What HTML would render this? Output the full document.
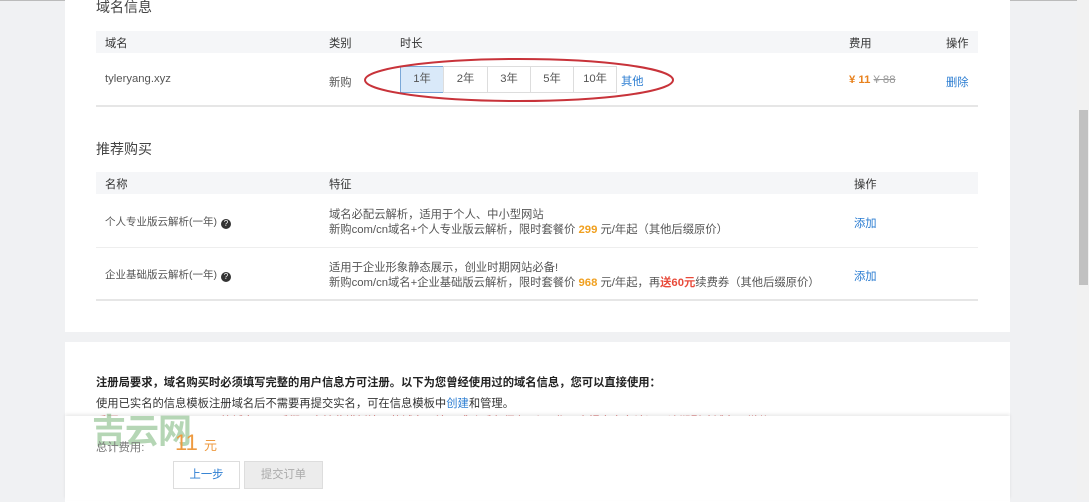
<!DOCTYPE html>
<html><head><meta charset="utf-8"><style>
*{margin:0;padding:0;box-sizing:border-box}
body{width:1089px;height:500px;overflow:hidden;background:#f0f1f3;font-family:"Liberation Sans","Noto Sans CJK SC",sans-serif;font-size:11.3px;color:#333;position:relative}
.a{position:absolute;white-space:nowrap}
.p{position:absolute;background:#fff;left:65px;width:945px}
.hd{position:absolute;left:96px;width:882px;background:#f5f6f8}
.ln{position:absolute;left:96px;width:882px;height:2px;background:#e6e6e6}
.ln1{position:absolute;left:96px;width:882px;height:1px;background:#eee}
.yb{position:absolute;top:66px;height:27px;border:1px solid #ddd;text-align:center;line-height:25px;color:#555;background:#fff}
.b{color:#2a7cd1}
.o{color:#f0a020;font-weight:bold}
.q{display:inline-block;width:10px;height:10px;border-radius:50%;background:#333;color:#fff;font-size:8px;line-height:10px;text-align:center;margin-left:4px;vertical-align:-1px}
</style></head><body>
<div style="position:absolute;left:0;top:0;width:1089px;height:1px;background:#bbb"></div>
<div class="p" style="top:0;height:332px"></div>
<div class="p" style="top:342px;height:160px"></div>
<div class="a" style="left:96px;top:-3px;font-size:14px;color:#444">域名信息</div>
<div class="hd" style="top:31px;height:22px"></div>
<div class="a" style="left:105px;top:35px">域名</div>
<div class="a" style="left:329px;top:35px">类别</div>
<div class="a" style="left:400px;top:35px">时长</div>
<div class="a" style="left:849px;top:35px">费用</div>
<div class="a" style="left:946px;top:35px">操作</div>
<div class="a" style="left:105px;top:73px;color:#555">tyleryang.xyz</div>
<div class="a" style="left:329px;top:74px;color:#555">新购</div>
<div class="yb" style="left:400px;width:44px;background:#d9e9f9;border-color:#7aa8d8">1年</div>
<div class="yb" style="left:443px;width:45px">2年</div>
<div class="yb" style="left:487px;width:44px">3年</div>
<div class="yb" style="left:530px;width:44px">5年</div>
<div class="yb" style="left:573px;width:44px">10年</div>
<div class="a b" style="left:621px;top:73px">其他</div>
<svg class="a" style="left:360px;top:55px" width="320" height="50"><ellipse cx="159" cy="25" rx="154" ry="21" fill="none" stroke="#c8333a" stroke-width="2"/></svg>
<div class="a" style="left:849px;top:74px"><span class="o" style="color:#e8821e">¥ 11</span> <span style="color:#999;text-decoration:line-through">¥ 88</span></div>
<div class="a b" style="left:946px;top:74px">删除</div>
<div class="ln" style="top:105px"></div>
<div class="a" style="left:96px;top:139px;font-size:14px;color:#444">推荐购买</div>
<div class="hd" style="top:172px;height:22px"></div>
<div class="a" style="left:105px;top:176px">名称</div>
<div class="a" style="left:329px;top:176px">特征</div>
<div class="a" style="left:854px;top:176px">操作</div>
<div class="a" style="left:105px;top:214px;font-size:10.5px;color:#555">个人专业版云解析(一年)<span class="q">?</span></div>
<div class="a" style="left:329px;top:206px;color:#555">域名必配云解析，适用于个人、中小型网站</div>
<div class="a" style="left:329px;top:221px;color:#555">新购com/cn域名+个人专业版云解析，限时套餐价 <span class="o">299</span> 元/年起（其他后缀原价）</div>
<div class="a b" style="left:854px;top:215px">添加</div>
<div class="ln1" style="top:247px"></div>
<div class="a" style="left:105px;top:267px;font-size:10.5px;color:#555">企业基础版云解析(一年)<span class="q">?</span></div>
<div class="a" style="left:329px;top:259px;color:#555">适用于企业形象静态展示，创业时期网站必备!</div>
<div class="a" style="left:329px;top:274px;color:#555">新购com/cn域名+企业基础版云解析，限时套餐价 <span class="o">968</span> 元/年起，再<span style="color:#e84a3a;font-weight:bold">送60元</span>续费券（其他后缀原价）</div>
<div class="a b" style="left:854px;top:268px">添加</div>
<div class="ln" style="top:299px"></div>
<div class="a" style="left:96px;top:374px;font-weight:bold;color:#222">注册局要求，域名购买时必须填写完整的用户信息方可注册。以下为您曾经使用过的域名信息，您可以直接使用：</div>
<div class="a" style="left:96px;top:395px;color:#333">使用已实名的信息模板注册域名后不需要再提交实名，可在信息模板中<span class="b">创建</span>和管理。</div>
<div class="a" style="left:96px;top:413px;color:#d45a5a">重要：.xin/.vip/.work/.red等域名以及后缀不支持此模板注册的域名，注册成功后必须在5个工作日内提交实名认证，逾期影响域名正常使用</div>
<div style="position:absolute;left:65px;top:416px;width:945px;height:84px;background:#fff;box-shadow:0 -2px 3px rgba(0,0,0,.08)"></div>
<div class="a" style="left:92px;top:404px;font-size:34px;color:rgba(120,180,120,.55);font-weight:bold;letter-spacing:-1px">吉云网</div>
<div class="a" style="left:96px;top:439px;color:#777">总计费用:</div>
<div class="a" style="left:175px;top:430px;font-size:22px;color:#ee9a40">11 <span style="font-size:13px">元</span></div>
<div class="a" style="left:173px;top:461px;width:67px;height:28px;border:1px solid #ddd;text-align:center;line-height:26px;color:#2a7cd1;background:#fff">上一步</div>
<div class="a" style="left:244px;top:461px;width:79px;height:28px;border:1px solid #ddd;text-align:center;line-height:26px;color:#aaa;background:#ececec">提交订单</div>
<div style="position:absolute;left:1077px;top:0;width:12px;height:500px;background:#f1f1f1"></div>
<div style="position:absolute;left:1079px;top:110px;width:9px;height:175px;background:#c1c1c1"></div>
</body></html>
